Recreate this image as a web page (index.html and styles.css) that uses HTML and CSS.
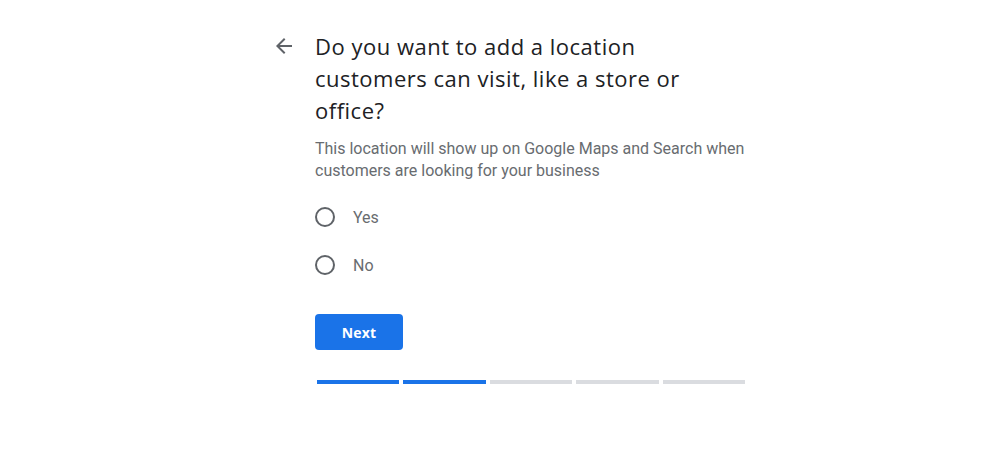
FILE: index.html
```html
<!DOCTYPE html>
<html lang="en">
<head>
<meta charset="utf-8">
<title>Add location</title>
<link rel="stylesheet" href="styles.css">
</head>
<body>
<div class="page">
  <button class="back" aria-label="Back">
    <svg width="24" height="24" viewBox="0 0 24 24"><path d="M20 11H7.83l5.59-5.59L12 4l-8 8 8 8 1.41-1.41L7.83 13H20v-2z" fill="#5f6368"/></svg>
  </button>
  <main class="content">
    <h1 class="title">Do you want to add a location customers can visit, like a store or office?</h1>
    <p class="desc">This location will show up on Google Maps and Search when customers are looking for your business</p>
    <div class="options">
      <label class="option"><span class="radio"></span><span class="label">Yes</span></label>
      <label class="option"><span class="radio"></span><span class="label">No</span></label>
    </div>
    <button class="next">Next</button>
    <div class="progress">
      <span class="seg done"></span>
      <span class="seg done"></span>
      <span class="seg"></span>
      <span class="seg"></span>
      <span class="seg"></span>
    </div>
  </main>
</div>
</body>
</html>
```
FILE: styles.css
```css
* { box-sizing: border-box; }
html, body { margin: 0; padding: 0; background: #fff; }
body { font-family: Roboto, "Liberation Sans", Arial, sans-serif; color: #3c4043; }
.page {
  display: flex;
  align-items: flex-start;
  margin-left: 272px;
  padding-top: 30px;
}
.back {
  width: 24px;
  height: 24px;
  padding: 0;
  margin-top: 4px;
  margin-right: 19px;
  border: 0;
  background: none;
  display: flex;
}
.content { width: 450px; }
.title {
  margin: 0;
  font-family: "Open Sans", Roboto, sans-serif;
  font-weight: 400;
  font-size: 22px;
  line-height: 32px;
  color: #202124;
  width: 380px;
  letter-spacing: 0.5px;
}
.desc {
  margin: 12px 0 0;
  font-size: 16px;
  line-height: 22px;
  color: #686c70;
}
.options { margin-top: 11px; display: flex; flex-direction: column; }
.option {
  height: 48px;
  display: flex;
  align-items: center;
}
.radio {
  width: 20px;
  height: 20px;
  border: 2px solid #5f6368;
  border-radius: 50%;
  margin-right: 18px;
}
.label { font-size: 16px; color: #686c70; }
.next {
  margin-top: 25px;
  width: 88px;
  height: 36px;
  border: 0;
  border-radius: 4px;
  background: #1a73e8;
  color: #fff;
  font-family: "Open Sans", Roboto, sans-serif;
  font-weight: 700;
  font-size: 14px;
  letter-spacing: 0.2px;
}
.progress {
  margin: 30px 0 0 2px;
  width: 428px;
  display: flex;
  gap: 4px;
}
.seg { flex: 1; height: 4px; background: #dadce0; }
.seg.done { background: #1a73e8; }
```
